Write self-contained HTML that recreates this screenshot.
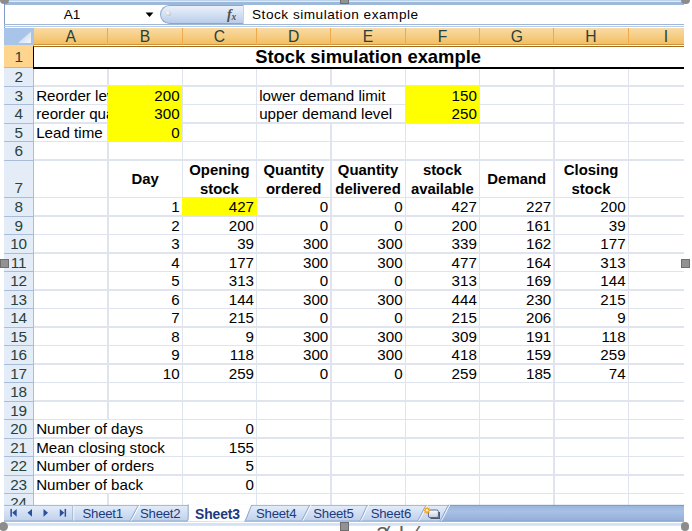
<!DOCTYPE html>
<html><head><meta charset="utf-8"><title>Stock simulation example</title>
<style>
html,body{margin:0;padding:0;background:#fff;}
body{width:692px;height:531px;position:relative;overflow:hidden;font-family:"Liberation Sans",sans-serif;}
.abs{position:absolute;}
.c{position:absolute;font-size:15.15px;color:#000;white-space:nowrap;overflow:hidden;line-height:18.5px;height:18.5px;}
.r{text-align:right;}
.h{position:absolute;font-size:14.9px;font-weight:bold;text-align:center;line-height:19.3px;white-space:nowrap;color:#000;}
.rh{position:absolute;left:4px;width:30px;text-align:center;font-size:15.3px;letter-spacing:-0.3px;color:#27413e;line-height:18.5px;background:#e4ecf7;box-sizing:border-box;border-bottom:1px solid #a9bdd8;border-right:1px solid #a9bdd8;}
.ch{position:absolute;top:27.5px;height:17.7px;text-align:center;font-size:15.7px;color:#27413e;line-height:17.6px;box-sizing:border-box;border-right:1px solid #f0a848;}
.gv{position:absolute;width:1.3px;background:#dfe4ef;}
.gh{position:absolute;height:1.3px;background:#dfe4ef;}
.y{position:absolute;background:#ffff00;}
.tab{position:absolute;top:505.9px;height:16px;line-height:16px;font-size:13.2px;color:#1c3a80;letter-spacing:-0.25px;white-space:nowrap;}
</style></head><body>

<div class="abs" style="left:4px;top:0;width:680px;height:4.6px;background:linear-gradient(#bcd3ec 0,#bcd3ec 22%,#dcecfa 23%,#dcecfa 45%,#9db8d8 46%,#9db8d8 100%);"></div>
<div class="abs" style="left:4px;top:4px;width:1px;height:517px;background:#7f9dc4;"></div>
<div class="abs" style="left:4px;top:23.6px;width:680px;height:1.2px;background:#9fb6d4;"></div>
<div class="abs" style="left:4px;top:26.2px;width:680px;height:1.3px;background:#b4cbe9;"></div>
<div class="abs" style="left:40px;top:5px;width:64px;text-align:center;font-size:13.6px;line-height:19px;color:#000;">A1</div>
<svg class="abs" style="left:145px;top:11.5px" width="9" height="6" viewBox="0 0 9 6"><path d="M0.6 0.6 L8.4 0.6 L4.5 5 Z" fill="#000"/></svg>
<div class="abs" style="left:159.5px;top:4.6px;width:84.5px;height:19.4px;box-sizing:border-box;border:1px solid #8ea8cc;border-right:1px solid #c3d3ea;border-radius:10px 0 0 10px;background:linear-gradient(#eaf1fb,#d3e0f3 50%,#b8cce9);"></div>
<div class="abs" style="left:165.6px;top:11px;width:5px;height:5px;border-radius:50%;background:radial-gradient(circle at 35% 35%,#fff,#c8c8c8 70%,#aaa);"></div>
<div class="abs" style="left:227px;top:4.6px;font-family:'Liberation Serif',serif;font-style:italic;font-weight:bold;font-size:14px;line-height:19px;color:#4f4f4f;letter-spacing:-0.3px;">f<span style="font-size:9.5px;position:relative;top:1.2px;">x</span></div>
<div class="abs" style="left:252px;top:5px;font-size:13.6px;line-height:19px;color:#000;letter-spacing:0.52px;white-space:nowrap;">Stock simulation example</div>
<div class="abs" style="left:4px;top:27.5px;width:29.6px;height:17.7px;background:#a9c4e9;"></div>
<svg class="abs" style="left:4px;top:27.5px" width="30" height="18" viewBox="0 0 30 18"><defs><linearGradient id="tg" x1="1" y1="1" x2="0.3" y2="0.3"><stop offset="0" stop-color="#f4f7fb"/><stop offset="1" stop-color="#cddcf0"/></linearGradient></defs><path d="M27 3.5 L27 15 L14 15 Z" fill="url(#tg)"/></svg>
<div class="abs" style="left:33.6px;top:27.5px;width:650.4px;height:17.7px;box-sizing:border-box;border-bottom:1.3px solid #d2913a;background:linear-gradient(#f9dba6,#f6cd84 50%,#f2c062);"></div>
<div class="ch" style="left:34.1px;width:74.3px;">A</div>
<div class="ch" style="left:108.4px;width:74.3px;">B</div>
<div class="ch" style="left:182.8px;width:74.3px;">C</div>
<div class="ch" style="left:257.1px;width:74.3px;">D</div>
<div class="ch" style="left:331.4px;width:74.3px;">E</div>
<div class="ch" style="left:405.8px;width:74.3px;">F</div>
<div class="ch" style="left:480.1px;width:74.3px;">G</div>
<div class="ch" style="left:554.4px;width:74.3px;">H</div>
<div class="ch" style="left:628.7px;width:74.3px;border-right:none;">I</div>
<div class="abs" style="left:4px;top:67.6px;width:30px;height:437.4px;background:#e4ecf7;"></div>
<div class="rh" style="top:45.20px;height:22.90px;background:#ffd58d;border-bottom:1px solid #f0b050;border-right:1px solid #e0a040;line-height:24.4px;">1</div>
<div class="rh" style="top:68.10px;height:18.50px;background:none;">2</div>
<div class="rh" style="top:86.60px;height:18.50px;background:none;">3</div>
<div class="rh" style="top:105.10px;height:18.50px;background:none;">4</div>
<div class="rh" style="top:123.60px;height:18.50px;background:none;">5</div>
<div class="rh" style="top:142.10px;height:18.50px;background:none;">6</div>
<div class="rh" style="top:160.60px;height:37.40px;background:none;line-height:18.5px;padding-top:18.4px;">7</div>
<div class="rh" style="top:198.00px;height:18.50px;background:none;">8</div>
<div class="rh" style="top:216.50px;height:18.50px;background:none;">9</div>
<div class="rh" style="top:235.00px;height:18.50px;background:none;">10</div>
<div class="rh" style="top:253.50px;height:18.50px;background:none;">11</div>
<div class="rh" style="top:272.00px;height:18.50px;background:none;">12</div>
<div class="rh" style="top:290.50px;height:18.50px;background:none;">13</div>
<div class="rh" style="top:309.00px;height:18.50px;background:none;">14</div>
<div class="rh" style="top:327.50px;height:18.50px;background:none;">15</div>
<div class="rh" style="top:346.00px;height:18.50px;background:none;">16</div>
<div class="rh" style="top:364.50px;height:18.50px;background:none;">17</div>
<div class="rh" style="top:383.00px;height:18.50px;background:none;">18</div>
<div class="rh" style="top:401.50px;height:18.50px;background:none;">19</div>
<div class="rh" style="top:420.00px;height:18.50px;background:none;">20</div>
<div class="rh" style="top:438.50px;height:18.50px;background:none;">21</div>
<div class="rh" style="top:457.00px;height:18.50px;background:none;">22</div>
<div class="rh" style="top:475.50px;height:18.50px;background:none;">23</div>
<div class="rh" style="top:494.00px;height:11.50px;background:none;border-bottom:none;">24</div>
<div class="gv" style="left:107.3px;top:68.6px;height:436.4px;"></div>
<div class="gv" style="left:181.6px;top:68.6px;height:436.4px;"></div>
<div class="gv" style="left:255.9px;top:68.6px;height:436.4px;"></div>
<div class="gv" style="left:330.3px;top:68.6px;height:436.4px;"></div>
<div class="gv" style="left:404.6px;top:68.6px;height:436.4px;"></div>
<div class="gv" style="left:478.9px;top:68.6px;height:436.4px;"></div>
<div class="gv" style="left:553.3px;top:68.6px;height:436.4px;"></div>
<div class="gv" style="left:627.6px;top:68.6px;height:436.4px;"></div>
<div class="gh" style="left:33.6px;top:85.4px;width:650.4px;"></div>
<div class="gh" style="left:33.6px;top:103.9px;width:650.4px;"></div>
<div class="gh" style="left:33.6px;top:122.4px;width:650.4px;"></div>
<div class="gh" style="left:33.6px;top:140.9px;width:650.4px;"></div>
<div class="gh" style="left:33.6px;top:159.4px;width:650.4px;"></div>
<div class="gh" style="left:33.6px;top:196.8px;width:650.4px;"></div>
<div class="gh" style="left:33.6px;top:215.3px;width:650.4px;"></div>
<div class="gh" style="left:33.6px;top:233.8px;width:650.4px;"></div>
<div class="gh" style="left:33.6px;top:252.3px;width:650.4px;"></div>
<div class="gh" style="left:33.6px;top:270.9px;width:650.4px;"></div>
<div class="gh" style="left:33.6px;top:289.4px;width:650.4px;"></div>
<div class="gh" style="left:33.6px;top:307.9px;width:650.4px;"></div>
<div class="gh" style="left:33.6px;top:326.4px;width:650.4px;"></div>
<div class="gh" style="left:33.6px;top:344.9px;width:650.4px;"></div>
<div class="gh" style="left:33.6px;top:363.4px;width:650.4px;"></div>
<div class="gh" style="left:33.6px;top:381.9px;width:650.4px;"></div>
<div class="gh" style="left:33.6px;top:400.4px;width:650.4px;"></div>
<div class="gh" style="left:33.6px;top:418.9px;width:650.4px;"></div>
<div class="gh" style="left:33.6px;top:437.4px;width:650.4px;"></div>
<div class="gh" style="left:33.6px;top:455.9px;width:650.4px;"></div>
<div class="gh" style="left:33.6px;top:474.4px;width:650.4px;"></div>
<div class="gh" style="left:33.6px;top:492.9px;width:650.4px;"></div>
<div class="y" style="left:107.5px;top:85.8px;width:74.9px;height:55.9px;"></div>
<div class="y" style="left:404.9px;top:85.8px;width:74.9px;height:37.4px;"></div>
<div class="y" style="left:181.9px;top:197.2px;width:74.9px;height:18.9px;"></div>
<div class="abs" style="left:33.3px;top:45.6px;width:650.7px;height:23.1px;background:#fff;box-sizing:border-box;border-left:1.4px solid #000;border-top:0.6px solid #a06c20;border-bottom:2px solid #000;"></div>
<div class="abs" style="left:33.6px;top:45.7px;width:669.0px;text-align:center;font-weight:bold;font-size:18.4px;line-height:22px;white-space:nowrap;">Stock simulation example</div>
<div class="c" style="left:36.2px;top:86.6px;width:71.5px;">Reorder level</div>
<div class="c" style="left:36.2px;top:105.1px;width:71.5px;">reorder quantity</div>
<div class="c" style="left:36.2px;top:123.6px;width:71.5px;">Lead time</div>
<div class="c r" style="left:107.9px;top:86.6px;width:71.7px;">200</div>
<div class="c r" style="left:107.9px;top:105.1px;width:71.7px;">300</div>
<div class="c r" style="left:107.9px;top:123.6px;width:71.7px;">0</div>
<div class="abs" style="left:328.9px;top:86.9px;width:3px;height:16.9px;background:#fff;"></div>
<div class="c" style="left:259.2px;top:86.6px;width:145.9px;">lower demand limit</div>
<div class="abs" style="left:328.9px;top:105.4px;width:3px;height:16.9px;background:#fff;"></div>
<div class="c" style="left:259.2px;top:105.1px;width:145.9px;">upper demand level</div>
<div class="c r" style="left:405.2px;top:86.6px;width:71.7px;">150</div>
<div class="c r" style="left:405.2px;top:105.1px;width:71.7px;">250</div>
<div class="c r" style="left:107.9px;top:198.4px;width:71.7px;">1</div>
<div class="c r" style="left:182.3px;top:198.4px;width:71.7px;">427</div>
<div class="c r" style="left:256.6px;top:198.4px;width:71.7px;">0</div>
<div class="c r" style="left:330.9px;top:198.4px;width:71.7px;">0</div>
<div class="c r" style="left:405.2px;top:198.4px;width:71.7px;">427</div>
<div class="c r" style="left:479.6px;top:198.4px;width:71.7px;">227</div>
<div class="c r" style="left:553.9px;top:198.4px;width:71.7px;">200</div>
<div class="c r" style="left:107.9px;top:216.9px;width:71.7px;">2</div>
<div class="c r" style="left:182.3px;top:216.9px;width:71.7px;">200</div>
<div class="c r" style="left:256.6px;top:216.9px;width:71.7px;">0</div>
<div class="c r" style="left:330.9px;top:216.9px;width:71.7px;">0</div>
<div class="c r" style="left:405.2px;top:216.9px;width:71.7px;">200</div>
<div class="c r" style="left:479.6px;top:216.9px;width:71.7px;">161</div>
<div class="c r" style="left:553.9px;top:216.9px;width:71.7px;">39</div>
<div class="c r" style="left:107.9px;top:235.4px;width:71.7px;">3</div>
<div class="c r" style="left:182.3px;top:235.4px;width:71.7px;">39</div>
<div class="c r" style="left:256.6px;top:235.4px;width:71.7px;">300</div>
<div class="c r" style="left:330.9px;top:235.4px;width:71.7px;">300</div>
<div class="c r" style="left:405.2px;top:235.4px;width:71.7px;">339</div>
<div class="c r" style="left:479.6px;top:235.4px;width:71.7px;">162</div>
<div class="c r" style="left:553.9px;top:235.4px;width:71.7px;">177</div>
<div class="c r" style="left:107.9px;top:253.9px;width:71.7px;">4</div>
<div class="c r" style="left:182.3px;top:253.9px;width:71.7px;">177</div>
<div class="c r" style="left:256.6px;top:253.9px;width:71.7px;">300</div>
<div class="c r" style="left:330.9px;top:253.9px;width:71.7px;">300</div>
<div class="c r" style="left:405.2px;top:253.9px;width:71.7px;">477</div>
<div class="c r" style="left:479.6px;top:253.9px;width:71.7px;">164</div>
<div class="c r" style="left:553.9px;top:253.9px;width:71.7px;">313</div>
<div class="c r" style="left:107.9px;top:272.4px;width:71.7px;">5</div>
<div class="c r" style="left:182.3px;top:272.4px;width:71.7px;">313</div>
<div class="c r" style="left:256.6px;top:272.4px;width:71.7px;">0</div>
<div class="c r" style="left:330.9px;top:272.4px;width:71.7px;">0</div>
<div class="c r" style="left:405.2px;top:272.4px;width:71.7px;">313</div>
<div class="c r" style="left:479.6px;top:272.4px;width:71.7px;">169</div>
<div class="c r" style="left:553.9px;top:272.4px;width:71.7px;">144</div>
<div class="c r" style="left:107.9px;top:290.9px;width:71.7px;">6</div>
<div class="c r" style="left:182.3px;top:290.9px;width:71.7px;">144</div>
<div class="c r" style="left:256.6px;top:290.9px;width:71.7px;">300</div>
<div class="c r" style="left:330.9px;top:290.9px;width:71.7px;">300</div>
<div class="c r" style="left:405.2px;top:290.9px;width:71.7px;">444</div>
<div class="c r" style="left:479.6px;top:290.9px;width:71.7px;">230</div>
<div class="c r" style="left:553.9px;top:290.9px;width:71.7px;">215</div>
<div class="c r" style="left:107.9px;top:309.4px;width:71.7px;">7</div>
<div class="c r" style="left:182.3px;top:309.4px;width:71.7px;">215</div>
<div class="c r" style="left:256.6px;top:309.4px;width:71.7px;">0</div>
<div class="c r" style="left:330.9px;top:309.4px;width:71.7px;">0</div>
<div class="c r" style="left:405.2px;top:309.4px;width:71.7px;">215</div>
<div class="c r" style="left:479.6px;top:309.4px;width:71.7px;">206</div>
<div class="c r" style="left:553.9px;top:309.4px;width:71.7px;">9</div>
<div class="c r" style="left:107.9px;top:327.9px;width:71.7px;">8</div>
<div class="c r" style="left:182.3px;top:327.9px;width:71.7px;">9</div>
<div class="c r" style="left:256.6px;top:327.9px;width:71.7px;">300</div>
<div class="c r" style="left:330.9px;top:327.9px;width:71.7px;">300</div>
<div class="c r" style="left:405.2px;top:327.9px;width:71.7px;">309</div>
<div class="c r" style="left:479.6px;top:327.9px;width:71.7px;">191</div>
<div class="c r" style="left:553.9px;top:327.9px;width:71.7px;">118</div>
<div class="c r" style="left:107.9px;top:346.4px;width:71.7px;">9</div>
<div class="c r" style="left:182.3px;top:346.4px;width:71.7px;">118</div>
<div class="c r" style="left:256.6px;top:346.4px;width:71.7px;">300</div>
<div class="c r" style="left:330.9px;top:346.4px;width:71.7px;">300</div>
<div class="c r" style="left:405.2px;top:346.4px;width:71.7px;">418</div>
<div class="c r" style="left:479.6px;top:346.4px;width:71.7px;">159</div>
<div class="c r" style="left:553.9px;top:346.4px;width:71.7px;">259</div>
<div class="c r" style="left:107.9px;top:364.9px;width:71.7px;">10</div>
<div class="c r" style="left:182.3px;top:364.9px;width:71.7px;">259</div>
<div class="c r" style="left:256.6px;top:364.9px;width:71.7px;">0</div>
<div class="c r" style="left:330.9px;top:364.9px;width:71.7px;">0</div>
<div class="c r" style="left:405.2px;top:364.9px;width:71.7px;">259</div>
<div class="c r" style="left:479.6px;top:364.9px;width:71.7px;">185</div>
<div class="c r" style="left:553.9px;top:364.9px;width:71.7px;">74</div>
<div class="abs" style="left:105.9px;top:420.3px;width:3px;height:16.9px;background:#fff;"></div>
<div class="c" style="left:36.2px;top:420.4px;width:145.9px;">Number of days</div>
<div class="abs" style="left:105.9px;top:438.8px;width:3px;height:16.9px;background:#fff;"></div>
<div class="c" style="left:36.2px;top:438.9px;width:145.9px;">Mean closing stock</div>
<div class="abs" style="left:105.9px;top:457.3px;width:3px;height:16.9px;background:#fff;"></div>
<div class="c" style="left:36.2px;top:457.4px;width:145.9px;">Number of orders</div>
<div class="abs" style="left:105.9px;top:475.8px;width:3px;height:16.9px;background:#fff;"></div>
<div class="c" style="left:36.2px;top:475.9px;width:145.9px;">Number of back</div>
<div class="c r" style="left:182.3px;top:420.4px;width:71.7px;">0</div>
<div class="c r" style="left:182.3px;top:438.9px;width:71.7px;">155</div>
<div class="c r" style="left:182.3px;top:457.4px;width:71.7px;">5</div>
<div class="c r" style="left:182.3px;top:475.9px;width:71.7px;">0</div>
<div class="h" style="left:107.9px;top:169.5px;width:74.3px;">Day</div>
<div class="h" style="left:179.3px;top:160.78px;width:80.3px;">Opening</div>
<div class="h" style="left:179.3px;top:179.88px;width:80.3px;">stock</div>
<div class="h" style="left:253.6px;top:160.78px;width:80.3px;">Quantity</div>
<div class="h" style="left:253.6px;top:179.88px;width:80.3px;">ordered</div>
<div class="h" style="left:327.9px;top:160.78px;width:80.3px;">Quantity</div>
<div class="h" style="left:327.9px;top:179.88px;width:80.3px;">delivered</div>
<div class="h" style="left:402.2px;top:160.78px;width:80.3px;">stock</div>
<div class="h" style="left:402.2px;top:179.88px;width:80.3px;">available</div>
<div class="h" style="left:479.6px;top:169.5px;width:74.3px;">Demand</div>
<div class="h" style="left:550.9px;top:160.78px;width:80.3px;">Closing</div>
<div class="h" style="left:550.9px;top:179.88px;width:80.3px;">stock</div>
<svg class="abs" style="left:0;top:500px" width="692" height="31" viewBox="0 0 692 31"><defs><linearGradient id="tb" x1="0" y1="0" x2="0" y2="1"><stop offset="0" stop-color="#e4edf9"/><stop offset="0.45" stop-color="#d3e0f3"/><stop offset="1" stop-color="#bdd0eb"/></linearGradient><linearGradient id="td" x1="0" y1="0" x2="0" y2="1"><stop offset="0" stop-color="#98b4dc"/><stop offset="0.4" stop-color="#a8c0e4"/><stop offset="1" stop-color="#90add8"/></linearGradient><linearGradient id="ic" x1="0" y1="0" x2="0" y2="1"><stop offset="0" stop-color="#ffffff"/><stop offset="1" stop-color="#c4cfe0"/></linearGradient></defs><rect x="4" y="5" width="680" height="16.6" fill="url(#tb)"/><path d="M440 21.6 L448.6 5 L684 5 L684 21.6 Z" fill="url(#td)"/><rect x="4" y="4.9" width="680" height="1" fill="#9db6d8"/><rect x="448" y="4.9" width="236" height="1.1" fill="#7f9dca"/><rect x="4" y="20.6" width="680" height="1" fill="#88a4cc"/><rect x="4" y="23" width="680" height="2.8" fill="#d3e2f5"/><path d="M188.2 4.6 L251.8 4.6 L244.3 21.7 L186.6 21.6 C187.8 21 188.2 20 188.2 18 Z" fill="#fff"/><path d="M188.2 4.5 L188.2 18 C188.2 20 187.6 21 186.4 21.4" stroke="#8aa5cd" stroke-width="1" fill="none"/><path d="M244.6 21.2 C246.6 20 250 7 252 5" stroke="#8aa5cd" stroke-width="1" fill="none"/><rect x="72.3" y="5.5" width="1" height="15" fill="#9fb6d6"/><rect x="73.3" y="5.5" width="1" height="15" fill="#f2f6fc"/><path d="M130.8 20.6 C132.8 19.5 137.8 7 139.8 5.2" stroke="#fff" stroke-width="1.1" fill="none" opacity="0.85"/><path d="M129.6 20.6 C131.6 19.5 136.6 7 138.6 5.2" stroke="#8aa5cd" stroke-width="1" fill="none"/><path d="M302.4 20.6 C304.4 19.5 309.2 7 311.2 5.2" stroke="#fff" stroke-width="1.1" fill="none" opacity="0.85"/><path d="M301.2 20.6 C303.2 19.5 308.0 7 310.0 5.2" stroke="#8aa5cd" stroke-width="1" fill="none"/><path d="M360.8 20.6 C362.8 19.5 366.8 7 368.8 5.2" stroke="#fff" stroke-width="1.1" fill="none" opacity="0.85"/><path d="M359.6 20.6 C361.6 19.5 365.6 7 367.6 5.2" stroke="#8aa5cd" stroke-width="1" fill="none"/><path d="M418.5 20.6 C420.5 19.5 425.5 7 427.5 5.2" stroke="#fff" stroke-width="1.1" fill="none" opacity="0.85"/><path d="M417.3 20.6 C419.3 19.5 424.3 7 426.3 5.2" stroke="#8aa5cd" stroke-width="1" fill="none"/><path d="M441.0 20.6 C443.0 19.5 447.8 7 449.8 5.2" stroke="#fff" stroke-width="1.1" fill="none" opacity="0.85"/><path d="M439.8 20.6 C441.8 19.5 446.6 7 448.6 5.2" stroke="#8aa5cd" stroke-width="1" fill="none"/><g fill="#2b4f9c"><rect x="10.4" y="8.9" width="1.5" height="7.8"/><path d="M16.7 8.9 L16.7 16.7 L12.2 12.8 Z"/><path d="M32 8.9 L32 16.7 L27.5 12.8 Z"/><path d="M43.5 8.9 L43.5 16.7 L48 12.8 Z"/><path d="M59.8 8.9 L59.8 16.7 L64.3 12.8 Z"/><rect x="64.6" y="8.9" width="1.5" height="7.8"/></g><rect x="428.4" y="10" width="10" height="7.6" rx="1.6" fill="url(#ic)" stroke="#5c6f8e" stroke-width="1"/><path d="M430.5 18.3 L439.3 18.3 L439.3 12" stroke="#4a5a78" stroke-width="1.4" fill="none"/><path d="M427 6.6 l0.9 1.7 1.8-0.6 -0.6 1.8 1.7 0.9 -1.7 0.9 0.6 1.8 -1.8-0.6 -0.9 1.7 -0.9-1.7 -1.8 0.6 0.6-1.8 -1.7-0.9 1.7-0.9 -0.6-1.8 1.8 0.6 Z" fill="#f2a11c"/><circle cx="427" cy="10.3" r="1.3" fill="#fff1c4"/></svg>
<div class="tab" style="left:82.5px;">Sheet1</div>
<div class="tab" style="left:140.0px;">Sheet2</div>
<div class="tab" style="left:195.0px;font-weight:bold;font-size:13.9px;letter-spacing:-0.1px;">Sheet3</div>
<div class="tab" style="left:256.0px;">Sheet4</div>
<div class="tab" style="left:313.3px;">Sheet5</div>
<div class="tab" style="left:370.7px;">Sheet6</div>
<div class="abs" style="left:370px;top:523.6px;width:60px;height:7.4px;overflow:hidden;font-size:22px;line-height:22px;color:#606060;white-space:nowrap;"><span style="position:absolute;left:6.3px;top:0;">3</span><span style="position:absolute;left:12px;top:0;transform:skewX(-14deg);">/</span><span style="position:absolute;left:29px;top:0;">l</span><span style="position:absolute;left:40.5px;top:0;transform:skewX(-20deg);">/</span></div>
<div class="abs" style="left:-0.1px;top:-4.4px;width:8.8px;height:8.8px;border-radius:50%;background:#8c8c8c;"></div>
<div class="abs" style="left:681.0px;top:-4.4px;width:8.8px;height:8.8px;border-radius:50%;background:#8c8c8c;"></div>
<div class="abs" style="left:-0.6px;top:521.8px;width:8.8px;height:8.8px;border-radius:50%;background:#8c8c8c;"></div>
<div class="abs" style="left:680.6px;top:522.0px;width:8.8px;height:8.8px;border-radius:50%;background:#8c8c8c;"></div>
<div class="abs" style="left:-0.2px;top:259.2px;width:8.9px;height:8.8px;box-sizing:border-box;border:1px solid #6e6e6e;background:#929292;"></div>
<div class="abs" style="left:681.0px;top:259.2px;width:8.9px;height:8.8px;box-sizing:border-box;border:1px solid #6e6e6e;background:#929292;"></div>
<div class="abs" style="left:340.3px;top:522.2px;width:8.9px;height:8.8px;box-sizing:border-box;border:1px solid #6e6e6e;background:#929292;"></div>
<div class="abs" style="left:340.3px;top:-4.4px;width:8.9px;height:8.8px;box-sizing:border-box;border:1px solid #6e6e6e;background:#929292;"></div>
</body></html>
